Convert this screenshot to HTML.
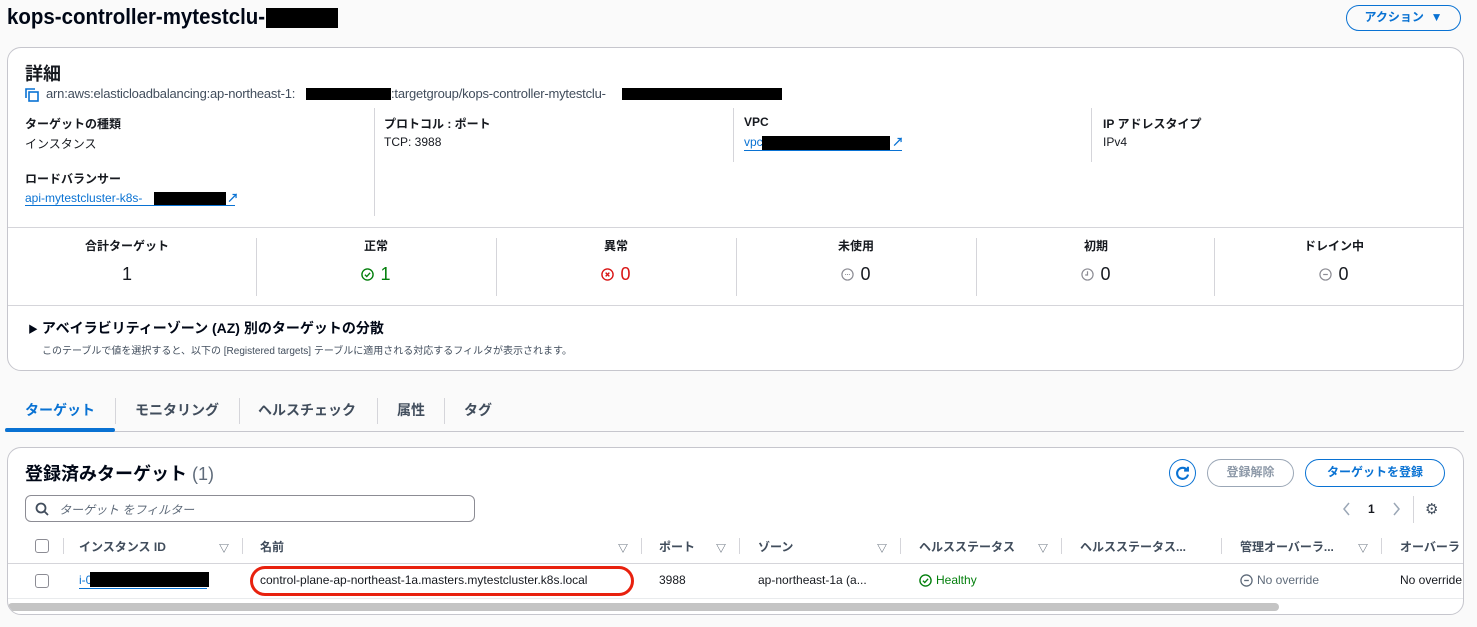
<!DOCTYPE html>
<html><head><meta charset="utf-8"><style>
*{box-sizing:border-box;margin:0;padding:0}
body{width:1477px;height:627px;overflow:hidden;background:#fafafa;font-family:"Liberation Sans","Noto Sans CJK JP",sans-serif;color:#16191f;position:relative;font-size:12px}
.a{position:absolute;white-space:nowrap}
.blk{position:absolute;background:#000}
.panel{position:absolute;background:#fff;border:1px solid #c6c6cd;border-radius:14px}
.lbl{font-weight:bold;font-size:12px}
.lnk{color:#0972d3}
.ul{position:absolute;height:1px;background:#0972d3}
.vd{position:absolute;width:1px;background:#d5d5da}
.hd{position:absolute;height:1px;background:#d5d5da}
.st{position:absolute;text-align:center;width:240px}
.st .l{font-weight:bold;font-size:12px;line-height:16px}
.st .v{font-size:18px;line-height:24px;margin-top:8px;display:flex;justify-content:center;align-items:center;gap:6px}
.btn{position:absolute;border:1.5px solid #0972d3;border-radius:16px;color:#0972d3;font-weight:bold;font-size:12px;text-align:center}
.tab{position:absolute;top:400px;font-size:14px;color:#414d5c;font-weight:bold}
.th{position:absolute;top:538px;font-size:12px;font-weight:bold;color:#414d5c}
.fl{position:absolute;top:540px;font-size:10px;color:#414d5c}
.cb{position:absolute;width:14px;height:14px;border:1px solid #8c8c94;border-radius:3px;background:#fff}
</style></head><body>

<div class="a" style="left:7px;top:4px;font-size:22px;font-weight:bold;color:#000716;transform:scaleX(0.93);transform-origin:left">kops-controller-mytestclu-</div>
<div class="blk" style="left:266px;top:8px;width:72px;height:20px"></div>

<div class="btn" style="left:1346px;top:5px;width:115px;height:26px;line-height:23px">アクション&nbsp;&nbsp;▼</div>

<div class="panel" style="left:7px;top:47px;width:1457px;height:324px"></div>
<div class="a" style="left:25px;top:60px;font-size:18px;font-weight:bold">詳細</div>
<svg class="a" style="left:25px;top:88px" width="14" height="14" viewBox="0 0 14 14"><path d="M1 10V1h9" fill="none" stroke="#0972d3" stroke-width="1.6"/><rect x="4" y="4" width="9" height="9" fill="none" stroke="#0972d3" stroke-width="1.6"/></svg>
<div class="a" style="left:46px;top:86px;font-size:13px;color:#414d5c;letter-spacing:-0.2px">arn:aws:elasticloadbalancing:ap-northeast-1:</div>
<div class="a" style="left:391px;top:86px;font-size:13px;color:#414d5c;letter-spacing:-0.2px">:targetgroup/kops-controller-mytestclu-</div>
<div class="blk" style="left:306px;top:88px;width:85px;height:12px"></div>
<div class="blk" style="left:622px;top:88px;width:160px;height:12px"></div>

<div class="a lbl" style="left:25px;top:115px">ターゲットの種類</div>
<div class="a" style="left:25px;top:135px">インスタンス</div>
<div class="a lbl" style="left:25px;top:170px">ロードバランサー</div>
<div class="a lnk" style="left:25px;top:191px">api-mytestcluster-k8s-</div>
<div class="blk" style="left:154px;top:192px;width:72px;height:13px"></div>
<div class="a lnk" style="left:227px;top:189px;font-size:12px;font-weight:bold">↗</div>
<div class="ul" style="left:25px;top:205px;width:210px"></div>
<div class="vd" style="left:374px;top:108px;height:108px"></div>
<div class="a lbl" style="left:384px;top:115px">プロトコル : ポート</div>
<div class="a" style="left:384px;top:135px">TCP: 3988</div>
<div class="vd" style="left:733px;top:108px;height:54px"></div>
<div class="a lbl" style="left:744px;top:115px">VPC</div>
<div class="a lnk" style="left:744px;top:135px">vpc-</div>
<div class="blk" style="left:762px;top:136px;width:128px;height:14px"></div>
<div class="a lnk" style="left:892px;top:133px;font-size:12px;font-weight:bold">↗</div>
<div class="ul" style="left:744px;top:150px;width:158px"></div>
<div class="vd" style="left:1091px;top:108px;height:54px"></div>
<div class="a lbl" style="left:1103px;top:115px">IP アドレスタイプ</div>
<div class="a" style="left:1103px;top:135px">IPv4</div>

<div class="hd" style="left:8px;top:227px;width:1455px"></div>
<div class="st" style="left:7px;top:238px"><div class="l">合計ターゲット</div><div class="v">1</div></div>
<div class="st" style="left:256px;top:238px"><div class="l">正常</div><div class="v" style="color:#037f0c"><svg width="13" height="13" viewBox="0 0 14 14"><circle cx="7" cy="7" r="6" fill="none" stroke="#037f0c" stroke-width="1.5"/><path d="M4.2 7.2l2 2 3.6-4" fill="none" stroke="#037f0c" stroke-width="1.5"/></svg>1</div></div>
<div class="st" style="left:496px;top:238px"><div class="l">異常</div><div class="v" style="color:#d91515"><svg width="13" height="13" viewBox="0 0 14 14"><circle cx="7" cy="7" r="6" fill="none" stroke="#d91515" stroke-width="1.5"/><path d="M5 5l4 4M9 5l-4 4" stroke="#d91515" stroke-width="1.5"/></svg>0</div></div>
<div class="st" style="left:736px;top:238px"><div class="l">未使用</div><div class="v"><svg width="13" height="13" viewBox="0 0 14 14"><circle cx="7" cy="7" r="6" fill="none" stroke="#8c8c94" stroke-width="1.3"/><path d="M4.5 7h1M6.5 7h1M8.5 7h1" stroke="#8c8c94" stroke-width="1.2"/></svg>0</div></div>
<div class="st" style="left:976px;top:238px"><div class="l">初期</div><div class="v"><svg width="13" height="13" viewBox="0 0 14 14"><circle cx="7" cy="7" r="6" fill="none" stroke="#8c8c94" stroke-width="1.3"/><path d="M7 3.5V7.5H4.5" fill="none" stroke="#8c8c94" stroke-width="1.3"/></svg>0</div></div>
<div class="st" style="left:1214px;top:238px"><div class="l">ドレイン中</div><div class="v"><svg width="13" height="13" viewBox="0 0 14 14"><circle cx="7" cy="7" r="6" fill="none" stroke="#8c8c94" stroke-width="1.3"/><path d="M4.5 7h5" stroke="#8c8c94" stroke-width="1.3"/></svg>0</div></div>
<div class="vd" style="left:256px;top:238px;height:58px"></div>
<div class="vd" style="left:496px;top:238px;height:58px"></div>
<div class="vd" style="left:736px;top:238px;height:58px"></div>
<div class="vd" style="left:976px;top:238px;height:58px"></div>
<div class="vd" style="left:1214px;top:238px;height:58px"></div>
<div class="hd" style="left:8px;top:305px;width:1455px"></div>
<div class="a" style="left:28px;top:318px;font-size:14px;font-weight:bold;color:#000716"><span style="font-size:10px">▶</span> アベイラビリティーゾーン (AZ) 別のターゲットの分散</div>
<div class="a" style="left:42px;top:342px;font-size:10px;color:#414d5c">このテーブルで値を選択すると、以下の [Registered targets] テーブルに適用される対応するフィルタが表示されます。</div>

<div class="tab" style="left:25px;color:#0972d3">ターゲット</div>
<div class="tab" style="left:135px">モニタリング</div>
<div class="tab" style="left:258px">ヘルスチェック</div>
<div class="tab" style="left:397px">属性</div>
<div class="tab" style="left:464px">タグ</div>
<div class="vd" style="left:115px;top:398px;height:26px"></div>
<div class="vd" style="left:239px;top:398px;height:26px"></div>
<div class="vd" style="left:377px;top:398px;height:26px"></div>
<div class="vd" style="left:444px;top:398px;height:26px"></div>
<div class="hd" style="left:5px;top:431px;width:1459px;background:#c6c6cd"></div>
<div class="a" style="left:5px;top:428px;width:110px;height:4px;background:#0972d3;border-radius:2px"></div>

<div class="panel" style="left:7px;top:447px;width:1457px;height:168px;overflow:hidden">
 <div class="a" style="left:0;top:155px;width:1271px;height:8px;background:#c4c4c4;border-radius:4px"></div>
</div>
<div class="a" style="left:25px;top:460px;font-size:18px;font-weight:bold;color:#000716">登録済みターゲット <span style="font-weight:normal;color:#5f6b7a">(1)</span></div>
<div class="a" style="left:1169px;top:459px;width:27px;height:28px;border:1.5px solid #0972d3;border-radius:50%"></div>
<svg class="a" style="left:1174px;top:465px" width="17" height="17" viewBox="0 0 16 16"><path d="M12.5 5A5.2 5.2 0 1 0 13.2 9" fill="none" stroke="#0972d3" stroke-width="2"/><path d="M9.5 5.2h3.6V1.6" fill="none" stroke="#0972d3" stroke-width="2"/></svg>
<div class="btn" style="left:1207px;top:459px;width:87px;height:28px;line-height:25px;border-color:#9ba7b6;color:#8d99a8">登録解除</div>
<div class="btn" style="left:1305px;top:459px;width:140px;height:28px;line-height:25px">ターゲットを登録</div>
<div class="a" style="left:25px;top:495px;width:450px;height:27px;border:1px solid #8c8c94;border-radius:6px;background:#fff"></div>
<svg class="a" style="left:35px;top:502px" width="14" height="14" viewBox="0 0 14 14"><circle cx="6" cy="6" r="4.5" fill="none" stroke="#414d5c" stroke-width="1.8"/><path d="M9.5 9.5L13 13" stroke="#414d5c" stroke-width="1.8"/></svg>
<div class="a" style="left:59px;top:501px;font-style:italic;color:#5f6b7a">ターゲット をフィルター</div>
<svg class="a" style="left:1342px;top:502px" width="10" height="14" viewBox="0 0 10 14"><path d="M7 1L2 7l5 6" fill="none" stroke="#9ba7b6" stroke-width="1.5"/></svg>
<div class="a" style="left:1368px;top:502px;font-weight:bold">1</div>
<svg class="a" style="left:1391px;top:502px" width="10" height="14" viewBox="0 0 10 14"><path d="M3 1l5 6-5 6" fill="none" stroke="#9ba7b6" stroke-width="1.5"/></svg>
<div class="vd" style="left:1413px;top:496px;height:27px"></div>
<div class="a" style="left:1425px;top:500px;font-size:15px;color:#414d5c">⚙</div>

<div class="cb" style="left:35px;top:539px"></div>
<div class="vd" style="left:63px;top:538px;height:16px"></div>
<div class="th" style="left:79px">インスタンス ID</div><div class="fl" style="left:219px">▽</div>
<div class="vd" style="left:242px;top:538px;height:16px"></div>
<div class="th" style="left:260px">名前</div><div class="fl" style="left:618px">▽</div>
<div class="vd" style="left:641px;top:538px;height:16px"></div>
<div class="th" style="left:659px">ポート</div><div class="fl" style="left:716px">▽</div>
<div class="vd" style="left:739px;top:538px;height:16px"></div>
<div class="th" style="left:758px">ゾーン</div><div class="fl" style="left:877px">▽</div>
<div class="vd" style="left:900px;top:538px;height:16px"></div>
<div class="th" style="left:919px">ヘルスステータス</div><div class="fl" style="left:1038px">▽</div>
<div class="vd" style="left:1061px;top:538px;height:16px"></div>
<div class="th" style="left:1080px">ヘルスステータス...</div>
<div class="vd" style="left:1221px;top:538px;height:16px"></div>
<div class="th" style="left:1240px">管理オーバーラ...</div><div class="fl" style="left:1358px">▽</div>
<div class="vd" style="left:1381px;top:538px;height:16px"></div>
<div class="th" style="left:1400px">オーバーラ</div>
<div class="hd" style="left:8px;top:563px;width:1455px"></div>

<div class="cb" style="left:35px;top:574px"></div>
<div class="a lnk" style="left:79px;top:573px">i-0</div>
<div class="blk" style="left:90px;top:572px;width:119px;height:15px"></div>
<div class="ul" style="left:79px;top:588px;width:128px"></div>
<div class="a" style="left:260px;top:573px">control-plane-ap-northeast-1a.masters.mytestcluster.k8s.local</div>
<div class="a" style="left:250px;top:566px;width:384px;height:30px;border:3px solid #e8210e;border-radius:15px"></div>
<div class="a" style="left:659px;top:573px">3988</div>
<div class="a" style="left:758px;top:573px">ap-northeast-1a (a...</div>
<svg class="a" style="left:919px;top:574px" width="13" height="13" viewBox="0 0 14 14"><circle cx="7" cy="7" r="6" fill="none" stroke="#037f0c" stroke-width="1.5"/><path d="M4.2 7.2l2 2 3.6-4" fill="none" stroke="#037f0c" stroke-width="1.5"/></svg>
<div class="a" style="left:936px;top:573px;color:#037f0c">Healthy</div>
<svg class="a" style="left:1240px;top:574px" width="13" height="13" viewBox="0 0 14 14"><circle cx="7" cy="7" r="6" fill="none" stroke="#5f6b7a" stroke-width="1.4"/><path d="M4.5 7h5" stroke="#5f6b7a" stroke-width="1.4"/></svg>
<div class="a" style="left:1257px;top:573px;color:#5f6b7a">No override</div>
<div class="a" style="left:1400px;top:573px">No override</div>
<div class="hd" style="left:8px;top:598px;width:1455px;background:#e9ebed"></div>
</body></html>
